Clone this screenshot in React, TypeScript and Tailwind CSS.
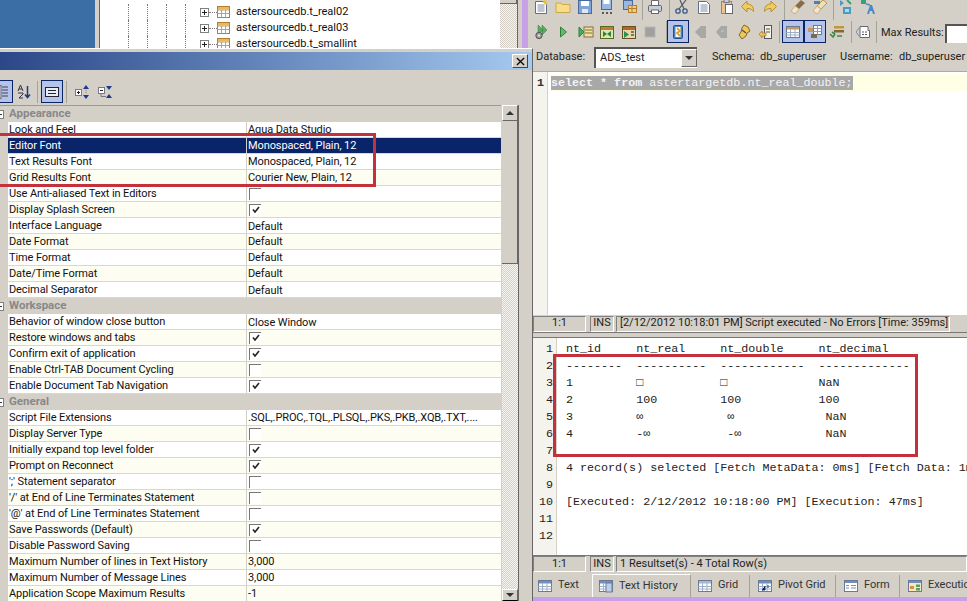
import type { ReactNode } from 'react';

const uiFont = "[font-family:'Roboto',sans-serif]";

type Row = { name: string; value?: string; check?: boolean; inset?: boolean; selected?: boolean };
type Group = { title: string; rows: Row[] };

const groups: Group[] = [
    {
        title: 'Appearance',
        rows: [
            { name: 'Look and Feel', value: 'Aqua Data Studio' },
            { name: 'Editor Font', value: 'Monospaced, Plain, 12', selected: true },
            { name: 'Text Results Font', value: 'Monospaced, Plain, 12' },
            { name: 'Grid Results Font', value: 'Courier New, Plain, 12' },
            { name: 'Use Anti-aliased Text in Editors', check: false },
            { name: 'Display Splash Screen', check: true },
            { name: 'Interface Language', value: 'Default', inset: true },
            { name: 'Date Format', value: 'Default' },
            { name: 'Time Format', value: 'Default' },
            { name: 'Date/Time Format', value: 'Default' },
            { name: 'Decimal Separator', value: 'Default', inset: true },
        ],
    },
    {
        title: 'Workspace',
        rows: [
            { name: 'Behavior of window close button', value: 'Close Window', inset: true },
            { name: 'Restore windows and tabs', check: true },
            { name: 'Confirm exit of application', check: true },
            { name: 'Enable Ctrl-TAB Document Cycling', check: false },
            { name: 'Enable Document Tab Navigation', check: true },
        ],
    },
    {
        title: 'General',
        rows: [
            { name: 'Script File Extensions', value: '.SQL,.PROC,.TQL,.PLSQL,.PKS,.PKB,.XQB,.TXT,....' },
            { name: 'Display Server Type', check: false },
            { name: 'Initially expand top level folder', check: true },
            { name: 'Prompt on Reconnect', check: true },
            { name: "';' Statement separator", check: false },
            { name: "'/' at End of Line Terminates Statement", check: false },
            { name: "'@' at End of Line Terminates Statement", check: false },
            { name: 'Save Passwords (Default)', check: true },
            { name: 'Disable Password Saving', check: false },
            { name: 'Maximum Number of lines in Text History', value: '3,000' },
            { name: 'Maximum Number of Message Lines', value: '3,000' },
            { name: 'Application Scope Maximum Results', value: '-1' },
        ],
    },
];

const resultLines = [
    'nt_id     nt_real     nt_double     nt_decimal',
    '--------  ----------  ------------  -------------',
    '1         \u25a1           \u25a1             NaN',
    '2         100         100           100',
    '3         \u221e            \u221e             NaN',
    '4         -\u221e           -\u221e            NaN',
    '',
    '4 record(s) selected [Fetch MetaData: 0ms] [Fetch Data: 1ms]',
    '',
    '[Executed: 2/12/2012 10:18:00 PM] [Execution: 47ms]',
    '',
    '',
];

function Ico({ className = '', children }: { className?: string; children: ReactNode }) {
    return (
        <svg viewBox="0 0 16 16" className={`h-4 w-4 shrink-0 ${className}`}>
            {children}
        </svg>
    );
}

function Page() {
    return (
        <>
            <path d="M2.5 2.5h8l3 3v9h-11z" fill="#fff" stroke="#5f6f86" />
            <path d="M4.5 6h7M4.5 8h7M4.5 10h7M4.5 12h7" stroke="#7d8ca6" />
        </>
    );
}

function Grid16({ head = '#6f8fc0' }: { head?: string }) {
    return (
        <>
            <rect x="1.5" y="2.5" width="13" height="11" fill="#fff" stroke="#6a7a94" />
            <rect x="2" y="3" width="12" height="2.5" fill={head} />
            <path d="M1.5 8.5h13M1.5 11h13M5.5 5v8M10 5v8" stroke="#9fb0c8" />
        </>
    );
}

function Sep({ className = '' }: { className?: string }) {
    return <div className={`h-[22px] w-px shrink-0 bg-[#a5a297] ${className}`} />;
}

function Pressed({ children, className = '' }: { children: ReactNode; className?: string }) {
    return (
        <div className={`flex h-[23px] w-[22px] shrink-0 items-center justify-center border border-[#0a246a] bg-[#b6c3e8] ${className}`}>
            {children}
        </div>
    );
}

function Check({ on }: { on: boolean }) {
    return (
        <div className="ml-px flex h-3 w-3 items-center justify-center border-t border-l border-t-[#777] border-l-[#777] bg-white">
            {on && (
                <svg viewBox="0 0 10 10" className="h-[10px] w-[10px]">
                    <path d="M2 4.5l2 2.5 4-5" fill="none" stroke="#222" strokeWidth="1.6" />
                </svg>
            )}
        </div>
    );
}

function PropRow({ row, stripe }: { row: Row; stripe: boolean }) {
    const bg = row.selected ? 'bg-[#0a246a] text-white' : stripe ? 'bg-[#fdfdf1] text-[#111]' : 'bg-white text-[#111]';
    return (
        <div className="flex h-4 shrink-0 bg-[#d4d0c8] pl-2">
            <div className={`flex h-4 flex-1 border-b border-b-[#d8d8ce] ${bg}`}>
                <div className="w-[238px] truncate pl-[1px] leading-[15px] tracking-[-0.1px]">{row.name}</div>
                <div className={`flex flex-1 items-center border-l border-l-[#d0d0c8] pl-px ${row.inset ? 'pl-[3px]' : ''}`}>
                    {row.check === undefined ? (
                        <span className={`whitespace-pre leading-[15px] tracking-[-0.1px] ${row.inset ? 'mt-px' : ''}`}>{row.value}</span>
                    ) : (
                        <Check on={row.check} />
                    )}
                </div>
            </div>
        </div>
    );
}

function GroupHead({ title }: { title: string }) {
    return (
        <div className="flex h-4 shrink-0 items-center bg-[#d4d0c8]">
            <div className="ml-[-5px] flex h-[9px] w-[9px] items-center justify-center border border-[#808080] bg-white">
                <div className="h-px w-[5px] bg-[#333]" />
            </div>
            <span className="ml-[5px] text-[11.500px] font-bold text-[#888]">{title}</span>
        </div>
    );
}

function TreeRow({ label }: { label: string }) {
    return (
        <div className="flex h-4 shrink-0 items-center pl-[28px]">
            <div className="h-4 w-[19px] border-l border-dotted border-l-[#777]" />
            <div className="h-4 w-[19px] border-l border-dotted border-l-[#777]" />
            <div className="h-4 w-[19px] border-l border-dotted border-l-[#777]" />
            <div className="h-4 w-[15px] border-l border-dotted border-l-[#777]" />
            <div className="flex h-[9px] w-[9px] items-center justify-center border border-[#808080] bg-white">
                <div className="relative h-px w-[5px] bg-[#222] after:absolute after:top-[-2px] after:left-[2px] after:h-[5px] after:w-px after:bg-[#222]" />
            </div>
            <div className="h-0 w-[8px] border-t border-dotted border-t-[#777]" />
            <svg viewBox="0 0 13 12" className="h-3 w-[13px] shrink-0">
                <rect x="0.5" y="0.5" width="12" height="11" fill="#fff" stroke="#b08030" />
                <rect x="1" y="1" width="11" height="2.5" fill="#e8b860" />
                <path d="M0.5 4h12M0.5 7.500h12M4.500 4v7.500M8.500 4v7.500" stroke="#c8a060" />
            </svg>
            <span className="ml-[6px] whitespace-pre text-[#111]">{label}</span>
        </div>
    );
}

function Sunken({ className = '', children }: { className?: string; children: ReactNode }) {
    return (
        <div className={`flex h-[16px] shrink-0 items-center overflow-hidden whitespace-pre border border-t-[#808080] border-r-white border-b-white border-l-[#808080] ${className}`}>
            {children}
        </div>
    );
}

function TabItem({ icon, label, className = '' }: { icon: ReactNode; label: string; className?: string }) {
    return (
        <div className={`flex h-full shrink-0 items-center ${className}`}>
            <Ico>{icon}</Ico>
            <span className="ml-[5px] whitespace-pre text-[#333]">{label}</span>
        </div>
    );
}

function TopBar() {
    return (
        <div className="-mt-px flex h-[21px] shrink-0 items-start overflow-hidden">
            <Ico><Page /><path d="M12 0l1 2 2 1-2 1-1 2-1-2-2-1 2-1z" fill="#f0c030" /></Ico>
            <Ico className="ml-[6px]"><path d="M1 4h5l1 1.500h8v8H1z" fill="#f8dc88" stroke="#c8a850" /></Ico>
            <Ico className="ml-[6px]"><rect x="1.500" y="1.500" width="13" height="13" fill="#7ea4d8" stroke="#4a6a9c" /><rect x="4" y="2" width="8" height="5" fill="#fff" /><rect x="5" y="10" width="6" height="4" fill="#dfe7f4" /></Ico>
            <Ico className="ml-[6px]"><rect x="2.500" y="0.500" width="10" height="10" fill="#9db8e0" stroke="#4a6a9c" /><rect x="4.500" y="1" width="6" height="4" fill="#fff" /><path d="M3 14h2M7 14h2M11 14h2" stroke="#333" strokeWidth="1.500" /></Ico>
            <Ico className="ml-[7px]"><rect x="1.500" y="1.500" width="9" height="9" fill="#9db8e0" stroke="#4a6a9c" /><rect x="6.500" y="6.500" width="8" height="7" fill="#f0d080" stroke="#b08030" /><path d="M6.500 9.500h8M10 6.500v7" stroke="#b08030" /></Ico>
            <Sep className="ml-[4px]" />
            <Ico className="ml-[4px]"><path d="M4.500 1.500h7v5h-7z" fill="#fff" stroke="#667" /><rect x="1.500" y="6.500" width="13" height="6" rx="1" fill="#c8ccd4" stroke="#667" /><rect x="4.500" y="11" width="7" height="3.500" fill="#fff" stroke="#667" /></Ico>
            <Sep className="ml-[6px]" />
            <Ico className="ml-[4px]"><circle cx="4" cy="12" r="2.200" fill="none" stroke="#3a5a90" strokeWidth="1.300" /><circle cx="11" cy="12" r="2.200" fill="none" stroke="#3a5a90" strokeWidth="1.300" /><path d="M5 10l7-9M10 10L6 1" stroke="#556" strokeWidth="1.200" /></Ico>
            <Ico className="ml-[6px]"><Page /></Ico>
            <Ico className="ml-[7px]"><rect x="2.500" y="2.500" width="10" height="12" fill="#e8c490" stroke="#a88450" /><rect x="6.500" y="5.500" width="7" height="9" fill="#fff" stroke="#667" /><rect x="5" y="0.500" width="5" height="3" fill="#c8ccd4" stroke="#778" /></Ico>
            <Ico className="ml-[5px]"><path d="M7 2L1.500 7.500 7 13V9.500c3 0 5 .5 6.500 3 .5-5-2.500-7.500-6.500-7.500z" fill="#f0cc60" stroke="#b89030" /></Ico>
            <Ico className="ml-[6px]"><path d="M9 2l5.500 5.500L9 13V9.500c-3 0-5 .5-6.500 3-.5-5 2.500-7.500 6.500-7.500z" fill="#f0cc60" stroke="#b89030" /></Ico>
            <Sep className="ml-[6px]" />
            <Ico className="ml-[5px]"><path d="M11 1l4 3-6 6-4-3z" fill="#8a6a48" /><path d="M5 7l4 3-4 5-4-3z" fill="#f4e4c8" stroke="#c8b088" /></Ico>
            <Ico className="ml-[6px]"><path d="M11 1l4 3-6 6-4-3z" fill="#f0e0b0" stroke="#b89860" /><path d="M5 7l4 3-4 5-4-3z" fill="#f4e4c8" stroke="#c8b088" /><path d="M2 2h6v3H2z" fill="#4a80b8" /></Ico>
            <Sep className="ml-[5px]" />
            <Ico className="ml-[4px]"><path d="M2 1l4 3-4 3zM5 8h8v7H5z" fill="#4a9ac8" /><path d="M7 10h4v3H7z" fill="#a8e0f0" /><path d="M9 1l4 4" stroke="#38a078" strokeWidth="2" /></Ico>
            <Ico className="ml-[6px]"><path d="M1 1h5v4H1z" fill="#38a078" /><path d="M7 15l3-9h2l3 9h-2l-1-3h-2l-1 3z" fill="#4a8ac8" /><path d="M6 5l4 1" stroke="#4a8ac8" strokeWidth="1.500" /></Ico>
        </div>
    );
}

function RunBar() {
    return (
        <div className="flex h-[23px] shrink-0 items-center">
            <Ico><path d="M5 1l5 5-5 5zM9 1l5 5-5 5z" fill="#58a860" stroke="#387840" strokeWidth="0.500" /><circle cx="6" cy="11.500" r="3.200" fill="#9a9a9a" stroke="#555" /><circle cx="6" cy="11.500" r="1" fill="#eee" /></Ico>
            <Ico className="ml-[6px]"><path d="M5.500 3l6 5-6 5z" fill="#68b868" stroke="#2e8040" /></Ico>
            <Ico className="ml-[7px]"><path d="M1 3l5 5-5 5z" fill="#40b060" stroke="#2e8040" /><rect x="6" y="3" width="9" height="10" fill="#f0e0a0" stroke="#807040" /><path d="M7 6h7M7 9h7" stroke="#807040" /></Ico>
            <Ico className="ml-[5px]"><rect x="1.500" y="2.500" width="13" height="12" fill="#d8e8b0" stroke="#606820" /><rect x="2" y="3" width="12" height="3" fill="#c87838" /><path d="M4 7l4 3 4-3v6l-4-3-4 3z" fill="#2e8040" /></Ico>
            <Ico className="ml-[6px]"><rect x="1.500" y="2.500" width="13" height="12" fill="#e8d8a8" stroke="#685020" /><rect x="2" y="3" width="12" height="3" fill="#b06830" /><path d="M3 7l5 3.500L3 14z" fill="#2e9050" /><path d="M10 8h3M10 11h3" stroke="#555" strokeWidth="1.500" /></Ico>
            <Ico className="ml-[5px]"><rect x="3" y="3" width="10" height="10" fill="#a0a0a0" stroke="#b8b8b0" /></Ico>
            <Sep className="ml-[8px]" />
            <Pressed><Ico><rect x="3.500" y="1.500" width="9" height="13" rx="1" fill="#4a80c0" stroke="#24508c" /><rect x="5.500" y="3" width="5" height="10" fill="#fff" /><path d="M7 4l3 3-3 2 3 3" stroke="#d8a030" strokeWidth="1.800" fill="none" /></Ico></Pressed>
            <Ico className="ml-[3px]"><path d="M9 2h5v12H9L3 8z" fill="#a8a8a4" /></Ico>
            <Ico className="ml-[6px]"><path d="M7 2h6v12H7L2 8z" fill="#a8a8a4" /><path d="M7 7h3" stroke="#ccc" /></Ico>
            <Ico className="ml-[6px]"><path d="M8 1l4 2 2 4-3 2-1 3-4 3-3-4 2-3 1-4z" fill="#f0c858" stroke="#8a6428" /><path d="M6 6l4 3" stroke="#555" strokeWidth="1.500" /></Ico>
            <Ico className="ml-[6px]"><rect x="6.500" y="1.500" width="7" height="13" fill="#f4f0e4" stroke="#555" /><path d="M8 5h4M8 8h4" stroke="#555" /><path d="M1 10l3-3v2h4v3H4v2z" fill="#f0c050" stroke="#a87c20" strokeWidth="0.700" /></Ico>
            <Sep className="ml-[5px]" />
            <Pressed className="ml-[2px]"><Ico><Grid16 head="#c89860" /></Ico></Pressed>
            <Pressed><Ico><rect x="6.500" y="1.500" width="8" height="9" fill="#fff" stroke="#6a7a94" /><path d="M6.500 4.500h8M6.500 7.500h8M10.500 1.500v9" stroke="#8a9ab4" /><rect x="1" y="4" width="5" height="4" fill="#c89860" /><rect x="4" y="10" width="6" height="4" fill="#7a6a50" /></Ico></Pressed>
            <Ico className="ml-[3px]"><rect x="5" y="2" width="10" height="2.500" fill="#c09838" /><rect x="5" y="6" width="10" height="2.500" fill="#806830" /><path d="M1 10l3 3 2-3" stroke="#3a8a50" strokeWidth="1.600" fill="none" /><path d="M3 8l3 2M8 12h5" stroke="#3a8a50" strokeWidth="1.600" /></Ico>
            <Sep className="ml-[6px]" />
            <Ico className="ml-[3px]"><path d="M5 2.500h8v4h1.500v7H5z" fill="#fff" stroke="#667" /><path d="M7 8h2M10 8h2M7 10.500h2M10 10.500h2" stroke="#556" /><path d="M4 4L1 8l3 4" stroke="#889" fill="none" /></Ico>
            <Sep className="ml-[5px]" />
            <span className="ml-[4px] mt-[3px] w-[62px] whitespace-pre text-[#222]">Max Results:</span>
            <div className="mt-[3px] ml-[2px] h-[19px] flex-1 border-t-2 border-l-2 border-t-[#555] border-l-[#555] bg-white" />
        </div>
    );
}

export default function App() {
    return (
        <div className={`flex h-[601px] w-[967px] overflow-hidden bg-[#d4d0c8] text-[11px] ${uiFont}`}>
            {/* left column: tree behind, options dialog in front */}
            <div className="flex h-full w-[533px] shrink-0 flex-col">
                <div className="flex h-[48px] shrink-0">
                    <div className="w-[95px] bg-[#3a6ea5]" />
                    <div className="w-[5px] border-r border-r-[#666] bg-[#d4d0c8]" />
                    <div className="flex w-[400px] flex-col overflow-hidden bg-white pt-[4px]">
                        <TreeRow label="astersourcedb.t_real02" />
                        <TreeRow label="astersourcedb.t_real03" />
                        <TreeRow label="astersourcedb.t_smallint" />
                    </div>
                    <div className="flex w-[18px] flex-col border-r border-r-[#666] bg-[repeating-conic-gradient(#f6f5f0_0_25%,#d4d0c8_0_50%)] bg-size-[2px_2px]">
                        <div className="h-[4px] w-[17px] border-r border-b border-r-[#666] border-b-[#666] bg-[#d4d0c8]" />
                    </div>
                    <div className="w-[4px]" />
                    <div className="w-[6px] bg-[#c8a0e8]" />
                    <div className="w-[5px]" />
                </div>

                <div className="flex min-h-0 flex-1 flex-col border-t border-r border-t-white border-r-[#666] bg-[#d4d0c8]">
                    <div className="h-[3px] shrink-0" />
                    <div className="flex h-[18px] shrink-0 items-center justify-end bg-gradient-to-r from-[#2c4788] to-[#a6caf0] pr-[4px]">
                        <div className="flex h-[14px] w-[16px] items-center justify-center border border-t-white border-r-[#444] border-b-[#444] border-l-white bg-[#d4d0c8]">
                            <svg viewBox="0 0 10 10" className="h-[9px] w-[9px]">
                                <path d="M1 1l8 8M9 1l-8 8" stroke="#111" strokeWidth="1.600" />
                            </svg>
                        </div>
                    </div>

                    <div className="flex h-[35px] shrink-0 items-center pt-[8px]">
                        <Pressed className="ml-[-9px]">
                            <Ico><rect x="2" y="1.500" width="5" height="13" fill="#dde" stroke="#667" /><path d="M8 3h6M8 6h6M8 9h6M8 12h6" stroke="#445" /></Ico>
                        </Pressed>
                        <Ico className="ml-[3px]"><path d="M2 7l2.500-6L7 7M3 5h3M2 9h5v1L3 14h4" fill="none" stroke="#334" /><path d="M11.500 2v11M9 10.500l2.500 3 2.500-3" fill="none" stroke="#1a3a88" strokeWidth="1.500" /></Ico>
                        <Sep className="ml-[5px]" />
                        <Pressed className="ml-[3px]">
                            <Ico><rect x="1.500" y="3.500" width="13" height="9" fill="#e8ecf4" stroke="#223" /><path d="M4 6.500h8M4 9.500h8" stroke="#223" /></Ico>
                        </Pressed>
                        <Sep className="ml-[3px]" />
                        <Ico className="ml-[6px] w-[18px]"><rect x="1.500" y="5.500" width="6" height="6" fill="#fff" stroke="#778" /><path d="M3 8.500h3M4.500 7v3" stroke="#223" /><path d="M12 1l3 4H9zM12 15l3-4H9z" fill="#1a3a88" /><path d="M12 6v4" stroke="#778" strokeDasharray="1 1" /></Ico>
                        <Ico className="ml-[5px] w-[18px]"><rect x="1.500" y="3.500" width="6" height="6" fill="#fff" stroke="#778" /><path d="M3 6.500h3" stroke="#223" /><path d="M4 9.500v3h5" stroke="#778" fill="none" /><path d="M12 6l3-4H9zM12 10l3 4H9z" fill="#1a3a88" /></Ico>
                    </div>

                    <div className="flex min-h-0 flex-1">
                        <div className="flex w-[501px] shrink-0 flex-col overflow-hidden border-t border-t-[#999]">
                            {groups.map((group) => (
                                <div key={group.title} className="flex shrink-0 flex-col">
                                    <GroupHead title={group.title} />
                                    {group.rows.map((row, i) => (
                                        <PropRow key={row.name} row={row} stripe={i % 2 === 1 && !row.selected} />
                                    ))}
                                </div>
                            ))}
                        </div>
                        <div className="ml-px flex w-[17px] shrink-0 flex-col border-r border-r-[#666] bg-[repeating-conic-gradient(#f6f5f0_0_25%,#d4d0c8_0_50%)] bg-size-[2px_2px]">
                            <div className="flex h-4 shrink-0 items-center justify-center border border-t-white border-r-[#666] border-b-[#666] border-l-white bg-[#d4d0c8]">
                                <div className="h-0 w-0 border-r-[4px] border-b-[4px] border-l-[4px] border-r-transparent border-b-[#333] border-l-transparent" />
                            </div>
                            <div className="h-[143px] shrink-0 border-r border-b border-r-[#666] border-b-[#666] bg-[#d4d0c8]" />
                            <div className="flex-1" />
                            <div className="flex h-[12px] shrink-0 items-center justify-center border border-t-white border-r-[#666] border-l-white bg-[#d4d0c8]">
                                <div className="h-0 w-0 border-t-[4px] border-r-[4px] border-l-[4px] border-t-[#333] border-r-transparent border-l-transparent" />
                            </div>
                        </div>
                    </div>
                </div>
            </div>

            {/* right column: query window */}
            <div className="flex h-full min-w-0 flex-1 flex-col">
                <TopBar />
                <RunBar />

                <div className="flex h-[28px] shrink-0 items-center pl-[3px] text-[#222]">
                    <span className="w-[49px] whitespace-pre">Database:</span>
                    <div className="ml-[9px] flex h-[21px] w-[103px] shrink-0 items-center border-t-2 border-l-2 border-t-[#555] border-l-[#555] bg-white pl-[4px]">
                        <span className="flex-1 whitespace-pre">ADS_test</span>
                        <div className="flex h-[18px] w-[16px] items-center justify-center border border-t-white border-r-[#666] border-b-[#666] border-l-white bg-[#d4d0c8]">
                            <div className="h-0 w-0 border-t-[4px] border-r-[4px] border-l-[4px] border-t-[#333] border-r-transparent border-l-transparent" />
                        </div>
                    </div>
                    <span className="ml-[15px] w-[48px] whitespace-pre">Schema:</span>
                    <span className="w-[80px] whitespace-pre">db_superuser</span>
                    <span className="w-[59px] whitespace-pre">Username:</span>
                    <span className="whitespace-pre">db_superuser</span>
                </div>

                <div className="flex min-h-0 flex-1 flex-col border-t border-t-[#aaa] bg-white">
                    <div className="flex flex-1">
                        <div className="w-[15px] shrink-0 border-r border-r-[#d4d0c8] bg-[#f4f3ee] pt-[3px] pr-[3px] text-right font-bold leading-[17px] [font-family:'Liberation_Mono',monospace] text-[11.700px] text-[#333]">
                            1
                        </div>
                        <div className="min-w-0 flex-1 pt-[2px] pl-[3px]">
                            <div className="h-[17px] bg-[#ffffe6] leading-[19px] [font-family:'Liberation_Mono',monospace] text-[11.700px]">
                                <span className="whitespace-pre bg-[#a8a8a8] text-[#f4f4f4]">
                                    <span className="font-bold">select * from</span> astertargetdb.nt_real_double;
                                </span>
                            </div>
                        </div>
                    </div>
                </div>

                <div className="flex h-[17px] shrink-0 items-center text-[#222]">
                    <Sunken className="w-[53px] justify-center">1:1</Sunken>
                    <Sunken className="ml-[4px] w-[24px] justify-center">INS</Sunken>
                    <Sunken className="ml-[2px] w-[334px] pl-[3px]">[2/12/2012 10:18:01 PM] Script executed - No Errors [Time: 359ms]</Sunken>
                </div>
                <div className="h-[6px] shrink-0 border-t border-b border-t-[#777] border-b-[#777]" />

                <div className="flex h-[217px] shrink-0 overflow-hidden bg-white [font-family:'Liberation_Mono',monospace] text-[11.700px] leading-[17px] text-[#222]">
                    <div className="w-[24px] shrink-0 border-r border-r-[#d4d0c8] bg-[#f4f3ee] pt-[3px] pr-[3px] text-right">
                        {resultLines.map((_, i) => (
                            <div key={i} className="h-[17px]">{i + 1}</div>
                        ))}
                    </div>
                    <div className="min-w-0 flex-1 overflow-hidden pt-[3px] pl-[9px]">
                        {resultLines.map((line, i) => (
                            <div key={i} className="h-[17px] whitespace-pre">{line}</div>
                        ))}
                    </div>
                </div>

                <div className="flex h-[17px] shrink-0 items-center border-t border-t-[#777] text-[#222]">
                    <Sunken className="w-[53px] justify-center">1:1</Sunken>
                    <Sunken className="ml-[4px] w-[24px] justify-center">INS</Sunken>
                    <Sunken className="ml-[2px] flex-1 pl-[3px]">1 Resultset(s) - 4 Total Row(s)</Sunken>
                </div>

                <div className="flex h-[25px] shrink-0 items-center pt-[2px]">
                    <TabItem className="ml-[4px] w-[55px]" label="Text" icon={<Grid16 />} />
                    <div className="flex h-[23px] w-[98px] shrink-0 items-center border-t border-l border-t-white border-l-white pl-[5px]">
                        <TabItem label="Text History" icon={<><Grid16 /><rect x="8" y="5" width="6" height="9" fill="#bcd0ea" stroke="#6a7a94" /></>} />
                    </div>
                    <Sep />
                    <TabItem className="ml-[6px] w-[52px]" label="Grid" icon={<Grid16 head="#a8b8d0" />} />
                    <Sep />
                    <TabItem className="ml-[7px] w-[78px]" label="Pivot Grid" icon={<><Grid16 /><path d="M8 8v4h-3M11 7v3" stroke="#1a3a88" /></>} />
                    <Sep />
                    <TabItem className="ml-[7px] w-[56px]" label="Form" icon={<><rect x="1.500" y="2.500" width="13" height="11" fill="#fff" stroke="#6a7a94" /><rect x="2" y="3" width="12" height="2" fill="#6f8fc0" /><path d="M3 7.500h3M3 10h3M8 7.500h5M8 10h5" stroke="#7d8ca6" /></>} />
                    <Sep />
                    <TabItem className="ml-[7px]" label="Execution Plan" icon={<><rect x="1.500" y="2.500" width="13" height="11" fill="#f4e8c8" stroke="#6a7a94" /><rect x="2" y="3" width="12" height="2" fill="#6f8fc0" /><rect x="3" y="8" width="4" height="3" fill="#d89040" /><rect x="9" y="6.500" width="4" height="2.500" fill="#58a060" /><rect x="9" y="10" width="4" height="2.500" fill="#58a060" /></>} />
                </div>
                <div className="h-[4px] shrink-0 bg-[#c8a0e8]" />
            </div>

            {/* red annotation boxes */}
            <div className="pointer-events-none absolute top-[133px] left-[-6px] h-[54px] w-[382px] border-3 border-[#c4303c]" />
            <div className="pointer-events-none absolute top-[354px] left-[553px] h-[103px] w-[365px] border-3 border-[#c4303c]" />
        </div>
    );
}
